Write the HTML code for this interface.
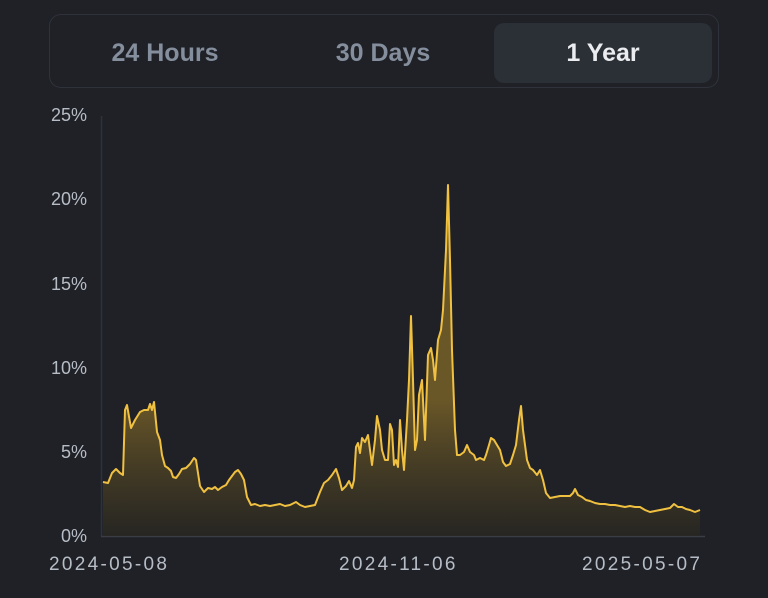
<!DOCTYPE html>
<html><head><style>
html,body{margin:0;padding:0;background:#1f2127;width:768px;height:598px;overflow:hidden;font-family:"Liberation Sans",sans-serif;}
.tabs{position:absolute;left:49px;top:14px;width:670px;height:74px;border:1.5px solid #2f323a;border-radius:12px;box-sizing:border-box;}
.tab{position:absolute;top:8px;height:60px;line-height:60px;text-align:center;font-size:25px;font-weight:bold;color:#848e9c;}
.sel{background:#2b2f36;border-radius:10px;color:#eaecef;}
.yl{position:absolute;right:681px;font-size:18px;color:#b7bdc6;}
.xl{position:absolute;top:554px;font-size:19px;letter-spacing:2.3px;color:#b7bdc6;}
</style></head><body>
<div class="tabs">
<div class="tab" style="left:55px;width:120px">24 Hours</div>
<div class="tab" style="left:268px;width:130px">30 Days</div>
<div class="tab sel" style="left:444px;width:218px">1 Year</div>
</div>
<div class="yl" style="top:105px">25%</div>
<div class="yl" style="top:189px">20%</div>
<div class="yl" style="top:274px">15%</div>
<div class="yl" style="top:358px">10%</div>
<div class="yl" style="top:442px">5%</div>
<div class="yl" style="top:526px">0%</div>
<div class="xl" style="left:49px">2024-05-08</div>
<div class="xl" style="left:339px">2024-11-06</div>
<div class="xl" style="left:582px">2025-05-07</div>
<svg width="768" height="598" style="position:absolute;left:0;top:0">
<defs><linearGradient id="g" gradientUnits="userSpaceOnUse" x1="0" y1="400" x2="0" y2="536"><stop offset="0" stop-color="#6e5a28" stop-opacity="0.95"/><stop offset="1" stop-color="#2a2820" stop-opacity="0.7"/></linearGradient></defs>
<line x1="101.5" y1="116" x2="101.5" y2="536" stroke="#2f323a" stroke-width="1.5"/>
<line x1="101" y1="536.5" x2="705" y2="536.5" stroke="#3a3d45" stroke-width="1.5"/>
<polygon fill="url(#g)" points="103,536 103,482 108,483 112,473 116,469 120,473 123,475 125,410 127,405 131,428 135,420 140,412 144,410 148,410 150,404 152,410 154,402 157,432 160,440 162,455 165,466 168,468 171,471 173,477 176,478 179,474 182,469 186,468 190,464 194,458 196,460 200,486 204,492 208,488 212,489 215,487 218,490 222,487 226,485 229,480 232,476 235,472 238,470 241,474 244,480 247,497 251,505 255,504 260,506 265,505 270,506 275,505 280,504 285,506 290,505 296,502 300,505 305,507 310,506 315,505 320,492 324,483 328,480 332,475 336,469 339,478 342,490 346,486 349,481 352,488 354,480 356,447 358,443 360,453 362,438 365,442 368,435 370,450 372,465 375,440 377,416 380,430 382,450 385,460 388,460 390,424 392,430 394,465 396,460 398,467 400,420 402,450 404,470 407,420 409,380 411,316 413,380 415,450 417,440 419,395 422,380 424,420 425,440 428,355 431,348 433,360 435,380 438,340 441,330 443,310 446,250 448,185 450,260 452,350 455,430 457,455 460,455 464,452 467,445 470,452 474,455 476,460 480,458 484,460 486,455 489,445 491,438 494,440 497,445 500,450 503,462 506,466 510,464 513,455 516,445 519,420 521,406 523,430 525,445 527,460 530,468 533,470 537,475 540,470 543,480 546,493 550,498 555,497 560,496 565,496 570,496 573,493 575,489 578,495 582,497 586,500 590,501 595,503 600,504 605,504 610,505 615,505 620,506 625,507 630,506 635,507 640,507 645,510 650,512 655,511 660,510 665,509 670,508 674,504 678,507 682,507 686,509 690,510 695,512 700,510 700,536"/>
<polyline fill="none" stroke="#f0c040" stroke-width="2" stroke-linejoin="round" points="103,482 108,483 112,473 116,469 120,473 123,475 125,410 127,405 131,428 135,420 140,412 144,410 148,410 150,404 152,410 154,402 157,432 160,440 162,455 165,466 168,468 171,471 173,477 176,478 179,474 182,469 186,468 190,464 194,458 196,460 200,486 204,492 208,488 212,489 215,487 218,490 222,487 226,485 229,480 232,476 235,472 238,470 241,474 244,480 247,497 251,505 255,504 260,506 265,505 270,506 275,505 280,504 285,506 290,505 296,502 300,505 305,507 310,506 315,505 320,492 324,483 328,480 332,475 336,469 339,478 342,490 346,486 349,481 352,488 354,480 356,447 358,443 360,453 362,438 365,442 368,435 370,450 372,465 375,440 377,416 380,430 382,450 385,460 388,460 390,424 392,430 394,465 396,460 398,467 400,420 402,450 404,470 407,420 409,380 411,316 413,380 415,450 417,440 419,395 422,380 424,420 425,440 428,355 431,348 433,360 435,380 438,340 441,330 443,310 446,250 448,185 450,260 452,350 455,430 457,455 460,455 464,452 467,445 470,452 474,455 476,460 480,458 484,460 486,455 489,445 491,438 494,440 497,445 500,450 503,462 506,466 510,464 513,455 516,445 519,420 521,406 523,430 525,445 527,460 530,468 533,470 537,475 540,470 543,480 546,493 550,498 555,497 560,496 565,496 570,496 573,493 575,489 578,495 582,497 586,500 590,501 595,503 600,504 605,504 610,505 615,505 620,506 625,507 630,506 635,507 640,507 645,510 650,512 655,511 660,510 665,509 670,508 674,504 678,507 682,507 686,509 690,510 695,512 700,510"/>
</svg>
</body></html>
